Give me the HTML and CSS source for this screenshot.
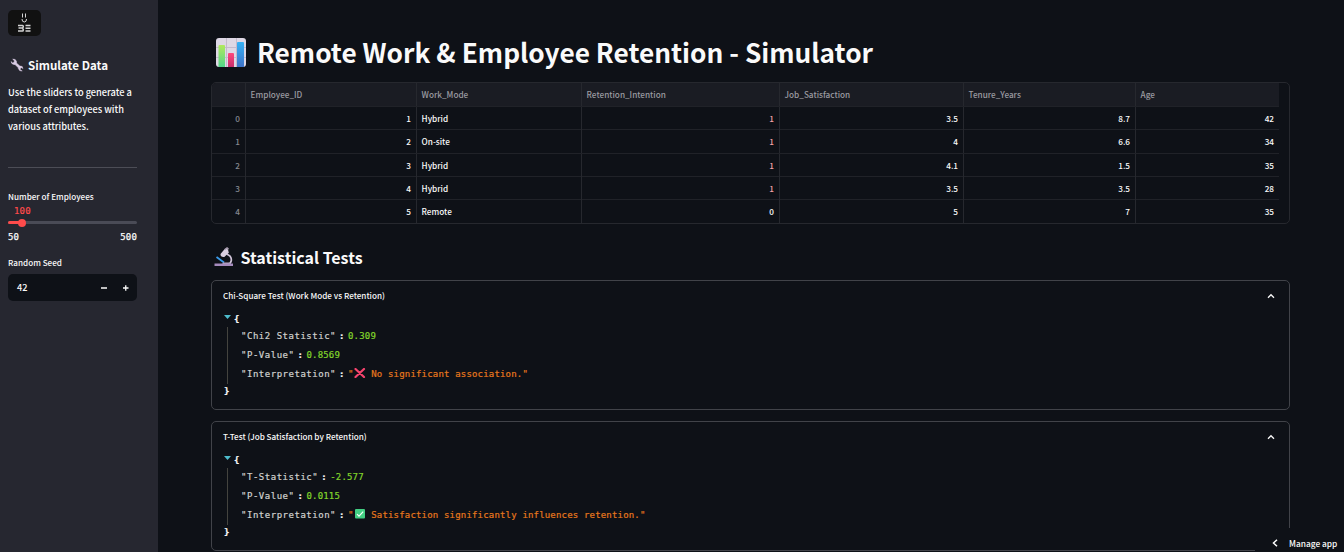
FILE: index.html
```html
<!DOCTYPE html>
<html lang="en">
<head>
<meta charset="utf-8">
<title>Remote Work &amp; Employee Retention - Simulator</title>
<link rel="stylesheet" href="styles.css">
</head>
<body>
<aside class="sidebar">
  <svg class="logo" width="33" height="26" viewBox="0 0 33 26"><rect width="33" height="26" rx="5" fill="#111"/><g fill="none" stroke="#d4d4d4"><path d="M14.500 3.500v4M17.500 3.500v4M14 9q0 3 2.300 3T18.500 9" stroke-width="1"/><path d="M10 15.500h4.500q.8 0 .8 1t-.8 1.500h-4M14.500 18.300q.8.500.8 1.600t-.8 1.100H10M17.500 15.500h5M17.500 18.300h5M17.500 21h5" stroke-width="1.500"/></g></svg>
  <h2 class="side-title"><svg width="14" height="14" viewBox="0 0 14 14"><path d="M1 3.600 2.800 5 4.300 4 4.100 2.200 2.700 1.200Q5.600.5 6.600 3.600L6.500 5.100 9.900 8.100Q12.700 7.600 13 10.500L11.400 9.700 10.100 10.800 10.600 12.300 12.200 12.900Q9.500 13.700 8.300 10.500L8.300 9.700 5 6.600Q1.600 6.900 1 3.600Z" fill="#d8cbe3" stroke="#d8cbe3" stroke-width=".5"/></svg><span>Simulate Data</span></h2>
  <p class="intro">Use the sliders to generate a<br>dataset of employees with<br>various attributes.</p>
  <hr class="rule">
  <label class="label">Number of Employees</label>
  <div class="value">100</div>
  <div class="track"><div class="fill"></div><div class="thumb"></div></div>
  <div class="range"><span>50</span><span>500</span></div>
  <label class="label">Random Seed</label>
  <div class="number"><span class="seed">42</span><svg width="30" height="10" viewBox="0 0 30 10"><path d="M1 5h6M23 5h5.500M25.750 2.250v5.500" stroke="#fafafa" stroke-width="1.300"/></svg></div>
</aside>
<main class="main">
  <h1 class="title"><svg width="32" height="32" viewBox="0 0 32 32"><defs><linearGradient id="g" x2="0" y2="1"><stop stop-color="#b1e95d"/><stop offset="1" stop-color="#52d58a"/></linearGradient><linearGradient id="r" x2="0" y2="1"><stop stop-color="#ff477b"/><stop offset="1" stop-color="#c72d6c"/></linearGradient><linearGradient id="b" x2="0" y2="1"><stop stop-color="#35b2f5"/><stop offset="1" stop-color="#3e72c8"/></linearGradient></defs><rect x="1" y="1" width="30" height="29" rx="3" fill="#ded8e5"/><path d="M1 10.500h30M1 20.500h30M11.500 1v29M21.500 1v29" stroke="#c4bacd"/><path d="M3.500 30V9q0-1 1-1h4.500q1 0 1 1v21z" fill="url(#g)"/><path d="M13 30V17q0-1 1-1h4q1 0 1 1v13z" fill="url(#r)"/><path d="M22 30V6q0-1 1-1h5q1 0 1 1v24z" fill="url(#b)"/></svg><span>Remote Work &amp; Employee Retention - Simulator</span></h1>
  <div class="table">
    <div class="tr th"><span></span><span>Employee_ID</span><span>Work_Mode</span><span>Retention_Intention</span><span>Job_Satisfaction</span><span>Tenure_Years</span><span>Age</span></div>
    <div class="tr"><span>0</span><span>1</span><span>Hybrid</span><span class="pink">1</span><span>3.5</span><span>8.7</span><span>42</span></div>
    <div class="tr"><span>1</span><span>2</span><span>On-site</span><span class="pink">1</span><span>4</span><span>6.6</span><span>34</span></div>
    <div class="tr"><span>2</span><span>3</span><span>Hybrid</span><span class="pink">1</span><span>4.1</span><span>1.5</span><span>35</span></div>
    <div class="tr"><span>3</span><span>4</span><span>Hybrid</span><span class="pink">1</span><span>3.5</span><span>3.5</span><span>28</span></div>
    <div class="tr"><span>4</span><span>5</span><span>Remote</span><span>0</span><span>5</span><span>7</span><span>35</span></div>
  </div>
  <h2 class="section"><svg width="20" height="20" viewBox="0 0 20 20"><path d="M12.500 7q5.300 2 4.800 6.500-.5 3-3 3.500" fill="none" stroke="#cfc3d8" stroke-width="1.700"/><path d="M6.500 7 10.500 2.200q2-1.700 3.500.2l.8 3.300-4.500 4.300q-4 .5-3.800-3z" fill="#d9cfe0"/><path d="m10.800 2.500 2.200-1.500 1.500 1.200" fill="none" stroke="#a59aae" stroke-width="1.500"/><path d="m2.500 10 7.500 5.500" stroke="#3a9be9" stroke-width="1.800"/><path d="M9 15.500h6l2 2H8z" fill="#b8a9c6"/><path d="M.5 16.500H19v2.500H.5z" fill="#a58bbd"/></svg><span>Statistical Tests</span></h2>
  <section class="card">
    <header class="card-head"><span>Chi-Square Test (Work Mode vs Retention)</span><svg width="8" height="6" viewBox="0 0 8 6"><path d="m1 4.700 3-3 3 3" fill="none" stroke="#fafafa" stroke-width="1.300"/></svg></header>
    <div class="json">
      <div class="brace"><i class="arrow"></i>{</div>
      <div class="entries">
        <div class="entry"><b>"Chi2 Statistic"</b><em>:</em><span class="num">0.309</span></div>
        <div class="entry"><b>"P-Value"</b><em>:</em><span class="num">0.8569</span></div>
        <div class="entry"><b>"Interpretation"</b><em>:</em><span class="str">"<svg class="mark" width="12" height="10" viewBox="0 0 12 10"><path d="m1.500 1 8.500 8M10 1 1.500 9" stroke="#f7446e" stroke-width="2.200" stroke-linecap="round"/></svg> No significant association."</span></div>
      </div>
      <div class="close">}</div>
    </div>
  </section>
  <section class="card">
    <header class="card-head"><span>T-Test (Job Satisfaction by Retention)</span><svg width="8" height="6" viewBox="0 0 8 6"><path d="m1 4.700 3-3 3 3" fill="none" stroke="#fafafa" stroke-width="1.300"/></svg></header>
    <div class="json">
      <div class="brace"><i class="arrow"></i>{</div>
      <div class="entries">
        <div class="entry"><b>"T-Statistic"</b><em>:</em><span class="num">-2.577</span></div>
        <div class="entry"><b>"P-Value"</b><em>:</em><span class="num">0.0115</span></div>
        <div class="entry"><b>"Interpretation"</b><em>:</em><span class="str">"<svg class="mark" width="12" height="10" viewBox="0 0 12 10"><rect x="1" y="0" width="10" height="9.500" rx="1" fill="#43cf83"/><path d="m3 5.200 2 2 4.200-4.500" fill="none" stroke="#f4fff8" stroke-width="1.200"/></svg> Satisfaction significantly influences retention."</span></div>
      </div>
      <div class="close">}</div>
    </div>
  </section>
</main>
<div class="manage"><svg width="6" height="8" viewBox="0 0 6 8"><path d="m5 .8-3.500 3.200L5 7.200" fill="none" stroke="#fff" stroke-width="1.500"/></svg><span>Manage app</span></div>
</body>
</html>
```
FILE: styles.css
```css
* { box-sizing: border-box; }
body { margin: 0; width: 1344px; height: 552px; overflow: hidden; display: flex; background: #0e1117; color: #fafafa; font: 500 8.200px/16px "Noto Sans CJK SC", "Noto Sans", sans-serif; position: relative; }
svg { flex: none; }
span { white-space: nowrap; }
.sidebar { width: 158px; height: 552px; padding: 10px 21px 0 8px; background: #262730; flex: none; }
.logo { display: block; }
.side-title { display: flex; align-items: center; gap: 4px; margin: 19px 0 0; padding-left: 2px; height: 20px; font-size: 11.600px; line-height: 20px; font-weight: 700; }
.intro { margin: 9px 0 0; font-size: 9.250px; line-height: 17px; white-space: nowrap; }
.rule { border: 0; height: 1px; background: #4c4d56; margin: 32px 0 21px; }
.label { display: block; height: 16px; font-size: 8.150px; line-height: 16px; }
.value { height: 12px; padding-left: 6px; color: #ff4b4b; font: 9px/12px "DejaVu Sans Mono", monospace; letter-spacing: .18px; -webkit-text-stroke: .2px; }
.track { position: relative; height: 3px; margin-top: 4px; border-radius: 2px; background: #4a4b56; }
.fill { height: 3px; width: 14px; border-radius: 2px; background: #ff4b4b; }
.thumb { position: absolute; left: 10px; top: -2.500px; width: 8px; height: 8px; border-radius: 50%; background: #ff4b4b; }
.range { display: flex; justify-content: space-between; margin: 5px 0 10px; height: 16px; font: 9px/16px "DejaVu Sans Mono", monospace; letter-spacing: .18px; -webkit-text-stroke: .25px; }
.number { display: flex; align-items: center; justify-content: space-between; height: 27px; margin-top: 3px; padding: 0 7px 0 9px; background: #0e1117; border-radius: 5px; }
.seed { font-size: 9.200px; line-height: 16px; padding-bottom: 1px; }
.main { width: 1079px; margin-left: 53px; padding-top: 36px; flex: none; }
.title { display: flex; align-items: center; gap: 10px; margin: 0; padding-left: 4px; height: 34px; font-size: 26.250px; line-height: 32px; font-weight: 700; }
.title span { height: 34px; }
.table { margin-top: 12px; height: 142px; border: 1px solid #26282e; border-radius: 5px; overflow: hidden; }
.tr { display: grid; grid-template-columns: 34px 171px 165px 198px 184px 172px 143px; width: 1067px; height: 23.250px; border-bottom: 1px solid #202228; line-height: 23px; }
.tr:last-child { border-bottom: 0; }
.tr span { padding: 0 5px; border-right: 1px solid #26282e; text-align: right; }
.tr span:first-child { color: #858890; }
.tr span:nth-child(3) { text-align: left; padding-left: 4.600px; }
.tr span:last-child { border-right: 0; }
.tr.th { height: 24px; background: #1a1c23; color: #9a9ba1; }
.tr.th span { text-align: left; line-height: 23px; padding-left: 4.600px; }
.tr .pink { color: #f5a2a8; }
.section { display: flex; align-items: center; gap: 7px; margin: 20px 0 10px; padding-left: 3px; height: 26px; font-size: 16px; line-height: 26px; font-weight: 700; }
.section span { margin-left: -.5px; }
.card { height: 130px; margin-bottom: 11px; padding: 6px 11px 0; border: 1px solid #414349; border-radius: 5px; }
.card-head { display: flex; align-items: center; justify-content: space-between; height: 18px; padding-right: 3px; font-size: 8.150px; }
.json { margin-top: 5px; padding-left: 1px; font: 9px/19px "DejaVu Sans Mono", monospace; letter-spacing: .18px; -webkit-text-stroke: .2px; }
.brace { display: flex; height: 17px; line-height: 19px; font-weight: 700; gap: 3px; }
.arrow { width: 7px; height: 4px; margin-top: 5px; background: #4dbdcd; clip-path: polygon(0 0, 100% 0, 50% 100%); }
.entries { margin-left: 3px; padding-left: 13px; border-left: 1px solid #44443f; height: 57px; }
.entry { height: 19px; display: flex; }
.entry b { font-weight: 400; letter-spacing: .520px; color: #d1d1cf; white-space: pre; }
.entry em { width: 12px; padding-left: 3px; font-style: normal; font-weight: 700; }
.num { color: #83d62b; }
.str { color: #e7781d; white-space: pre; }
.mark { vertical-align: -1px; }
.close { height: 16px; line-height: 15px; font-weight: 700; }
.manage { position: absolute; right: 0; bottom: 0; width: 89px; height: 24px; display: flex; align-items: center; gap: 11px; padding: 5px 0 0 17px; background: #0e1117; font-size: 8.350px; line-height: 16px; }
```
